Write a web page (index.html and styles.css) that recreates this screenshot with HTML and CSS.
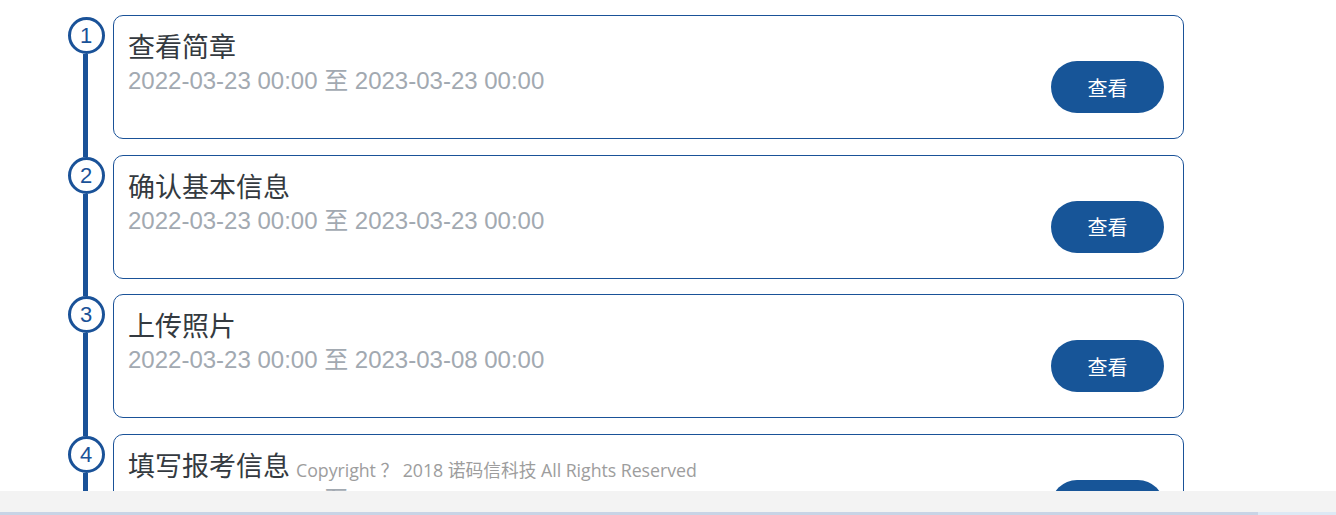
FILE: index.html
```html
<!DOCTYPE html>
<html lang="zh-CN">
<head>
<meta charset="utf-8">
<title>报名流程</title>
<link rel="stylesheet" href="styles.css">
</head>
<body>
<div class="page">
  <main class="viewport">
    <ol class="timeline">
      <li class="step first">
        <div class="rail"><span class="rail-top"></span><span class="num">1</span><span class="rail-line"></span></div>
        <div class="card">
          <div class="info">
            <div class="title">查看简章</div>
            <div class="date">2022-03-23 00:00 至 2023-03-23 00:00</div>
          </div>
          <button class="btn">查看</button>
        </div>
      </li>
      <li class="step">
        <div class="rail"><span class="rail-top"></span><span class="num">2</span><span class="rail-line"></span></div>
        <div class="card">
          <div class="info">
            <div class="title">确认基本信息</div>
            <div class="date">2022-03-23 00:00 至 2023-03-23 00:00</div>
          </div>
          <button class="btn">查看</button>
        </div>
      </li>
      <li class="step">
        <div class="rail"><span class="rail-top"></span><span class="num">3</span><span class="rail-line"></span></div>
        <div class="card">
          <div class="info">
            <div class="title">上传照片</div>
            <div class="date">2022-03-23 00:00 至 2023-03-08 00:00</div>
          </div>
          <button class="btn">查看</button>
        </div>
      </li>
      <li class="step">
        <div class="rail"><span class="rail-top"></span><span class="num">4</span><span class="rail-line"></span></div>
        <div class="card">
          <div class="info">
            <div class="title">填写报考信息</div>
            <div class="date">2022-03-23 00:00 至 2023-03-23 00:00</div>
          </div>
          <button class="btn">查看</button>
        </div>
      </li>
    </ol>
  </main>
  <p class="copyright">Copyright ？ 2018 诺码信科技 All Rights Reserved</p>
  <div class="footer-bar"></div>
  <div class="scroll-line"><span class="scroll-thumb"></span></div>
</div>
</body>
</html>
```
FILE: styles.css
```css
* { box-sizing: border-box; }
html, body { margin: 0; padding: 0; background: #fff; }
body { font-family: "Liberation Sans", Arial, "Noto Sans CJK SC", sans-serif; }

.page { position: relative; width: 1336px; height: 515px; overflow: hidden; }

.viewport { height: 491px; overflow: hidden; }

.timeline {
  list-style: none;
  margin: 0;
  padding: 15px 152px 0 68px;
}

.step { display: flex; gap: 9px; }

.rail {
  width: 36px;
  display: flex;
  flex-direction: column;
  align-items: center;
  flex: 0 0 36px;
}
.rail-top { width: 5px; height: 2px; background: #1a5298; margin-left: -1px; }
.first .rail-top { background: transparent; }
.rail-line { width: 5px; flex: 1; background: #1a5298; margin-left: -1px; }

.num {
  width: 37px;
  height: 37px;
  border: 3px solid #1a5298;
  border-radius: 50%;
  background: #fff;
  color: #1a5298;
  font-size: 22px;
  line-height: 31px;
  text-align: center;
}

.card {
  flex: 1;
  height: 124px;
  margin-bottom: 15.67px;
  border: 1px solid #1a5298;
  border-radius: 10px;
  padding: 14px 19px 0 14px;
  display: flex;
  justify-content: space-between;
  align-items: flex-start;
}

.title {
  font-family: "Noto Sans CJK SC", sans-serif;
  font-size: 27px;
  line-height: 32px;
  color: #343a40;
}
.date {
  margin-top: 4px;
  font-size: 24px;
  line-height: 30px;
  color: #a2a9b1;
}

.btn {
  margin-top: 31px;
  width: 113px;
  height: 52px;
  border: 0;
  border-radius: 26px;
  background: #175598;
  color: #fff;
  font-family: "Noto Sans CJK SC", sans-serif;
  font-size: 20px;
  padding: 0;
}

.copyright {
  position: absolute;
  left: 296px;
  top: 456px;
  margin: 0;
  font-family: "Open Sans", "Noto Sans CJK SC", sans-serif;
  font-size: 17.8px;
  letter-spacing: -0.05px;
  line-height: 28px;
  color: #9d9d9d;
}

.footer-bar { height: 21px; background: #f3f3f3; }

.scroll-line { height: 3px; background: #dde9f5; display: flex; }
.scroll-thumb { width: 1258px; background: #c8d4e6; }
```
